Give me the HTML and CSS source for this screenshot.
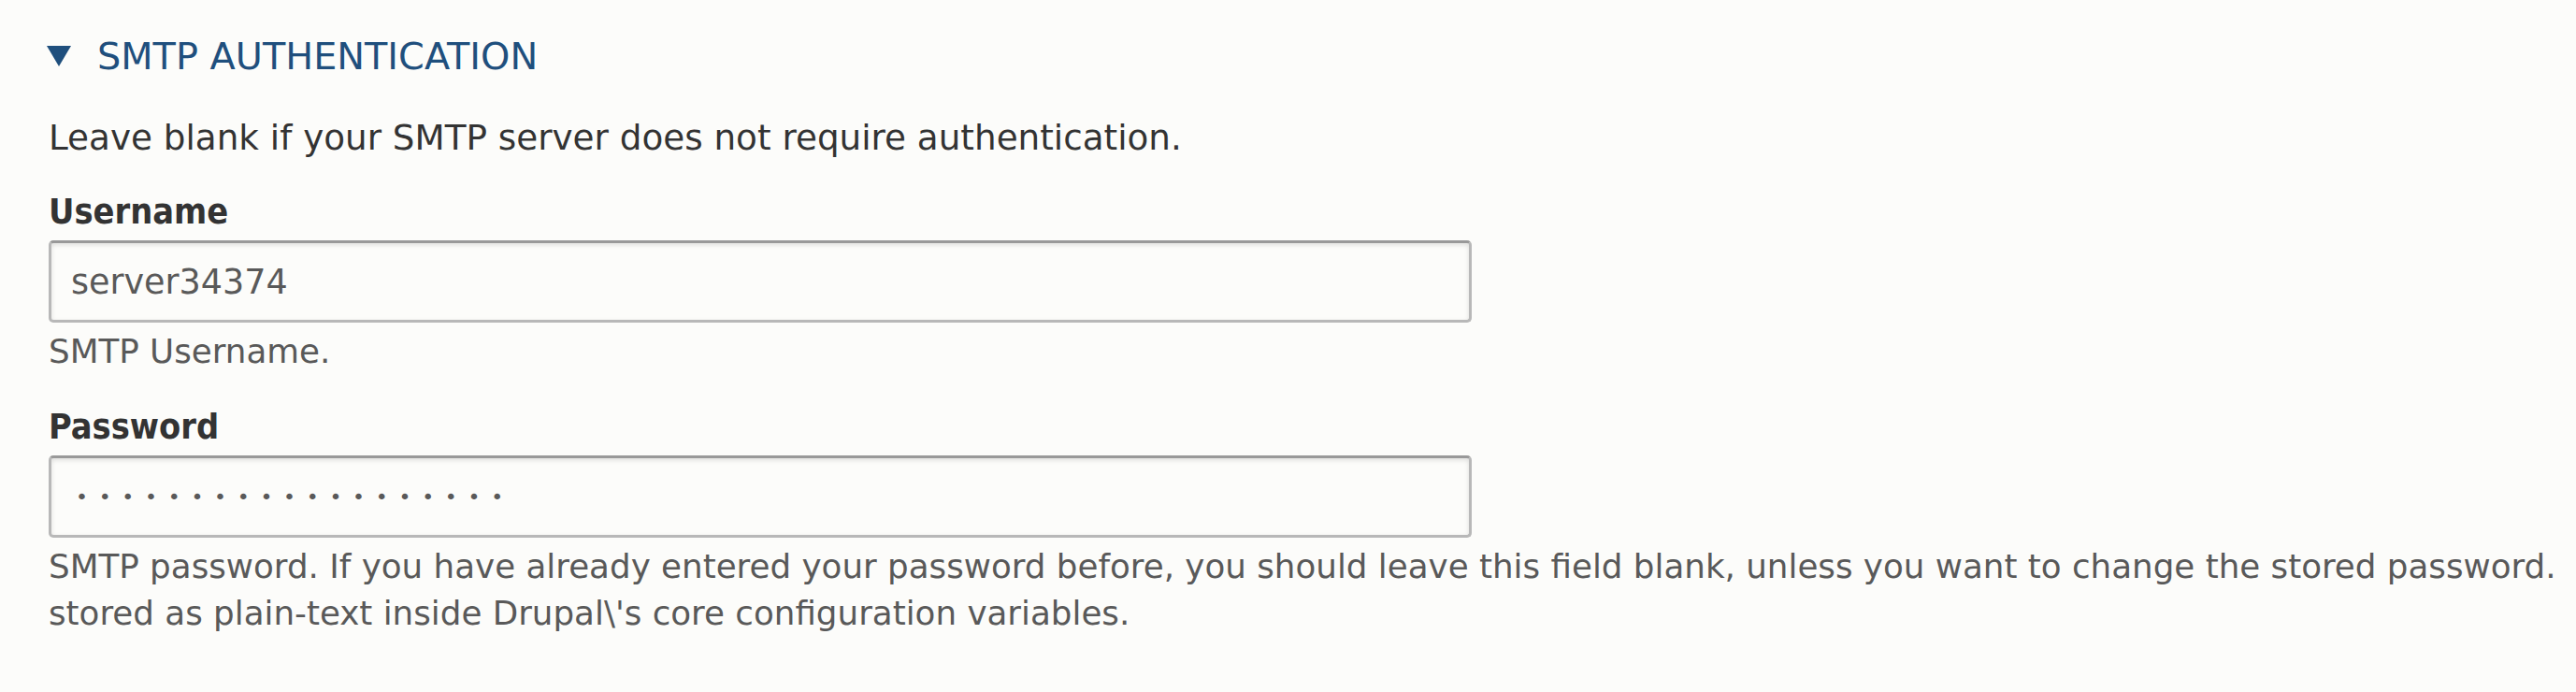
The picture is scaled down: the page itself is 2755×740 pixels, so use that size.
FILE: index.html
```html
<!DOCTYPE html>
<html lang="en">
<head>
<meta charset="utf-8">
<title>SMTP Authentication</title>
<link rel="stylesheet" href="styles.css">
</head>
<body>
<details class="fieldset" open>
	<summary class="fieldset-title">
		<svg class="arrow" width="26" height="22" viewBox="0 0 26 22"><path d="M0 0H26L13 22Z"/></svg>
		<span>SMTP Authentication</span>
	</summary>
	<div class="fieldset-wrapper">
		<p class="fieldset-intro">Leave blank if your SMTP server does not require authentication.</p>

		<div class="form-item">
			<label for="smtp-username">Username</label>
			<input id="smtp-username" class="form-text" type="text" value="server34374">
			<div class="description">SMTP Username.</div>
		</div>

		<div class="form-item">
			<label for="smtp-password">Password</label>
			<input id="smtp-password" class="form-text form-password" type="password" value="correcthorsebattery">
			<div class="description">SMTP password. If you have already entered your password before, you should leave this field blank, unless you want to change the stored password.<br>stored as plain-text inside Drupal\'s core configuration variables.</div>
		</div>
	</div>
</details>
</body>
</html>
```

FILE: styles.css
```css
html {overflow: hidden;}
body {margin: 0; background: #fcfcfa; color: #333; font-family: "DejaVu Sans", sans-serif;}

.fieldset {padding: 36px 0 0 50px;}
.fieldset-title {
	display: flex;
	align-items: center;
	gap: 28px;
	list-style: none;
	height: 48px;
	font-size: 39.8px;
	line-height: 48px;
	color: #1f4f7d;
	text-transform: uppercase;
	cursor: pointer;
}
.fieldset-title::-webkit-details-marker {display: none;}
.fieldset-title .arrow {fill: #1f4f7d; flex: none;}

.fieldset-wrapper {padding-left: 2px;}
.fieldset-intro {margin: 39px 0 0; font-size: 37.3px; line-height: 48px;}

.form-item {margin-top: 31px;}
.form-item label {display: block; font-size: 37.6px; line-height: 48px; font-weight: bold; font-stretch: condensed;}

.form-text {
	display: block;
	box-sizing: border-box;
	width: 1522px;
	height: 88px;
	margin-top: 7px;
	padding: 0 21px;
	border: 3px solid #b8b8b8;
	border-top-color: #999;
	border-radius: 5px;
	background: #fcfcfa;
	box-shadow: inset 0 2px 5px rgba(0, 0, 0, .125);
	font-family: "DejaVu Sans", sans-serif;
	font-size: 36.5px;
	color: #595959;
	outline: none;
}
.form-password {padding-left: 26px; font-size: 22px; letter-spacing: 11.7px;}

.description {margin-top: 6px; font-size: 35.7px; line-height: 50px; color: #595959; white-space: nowrap;}
```
